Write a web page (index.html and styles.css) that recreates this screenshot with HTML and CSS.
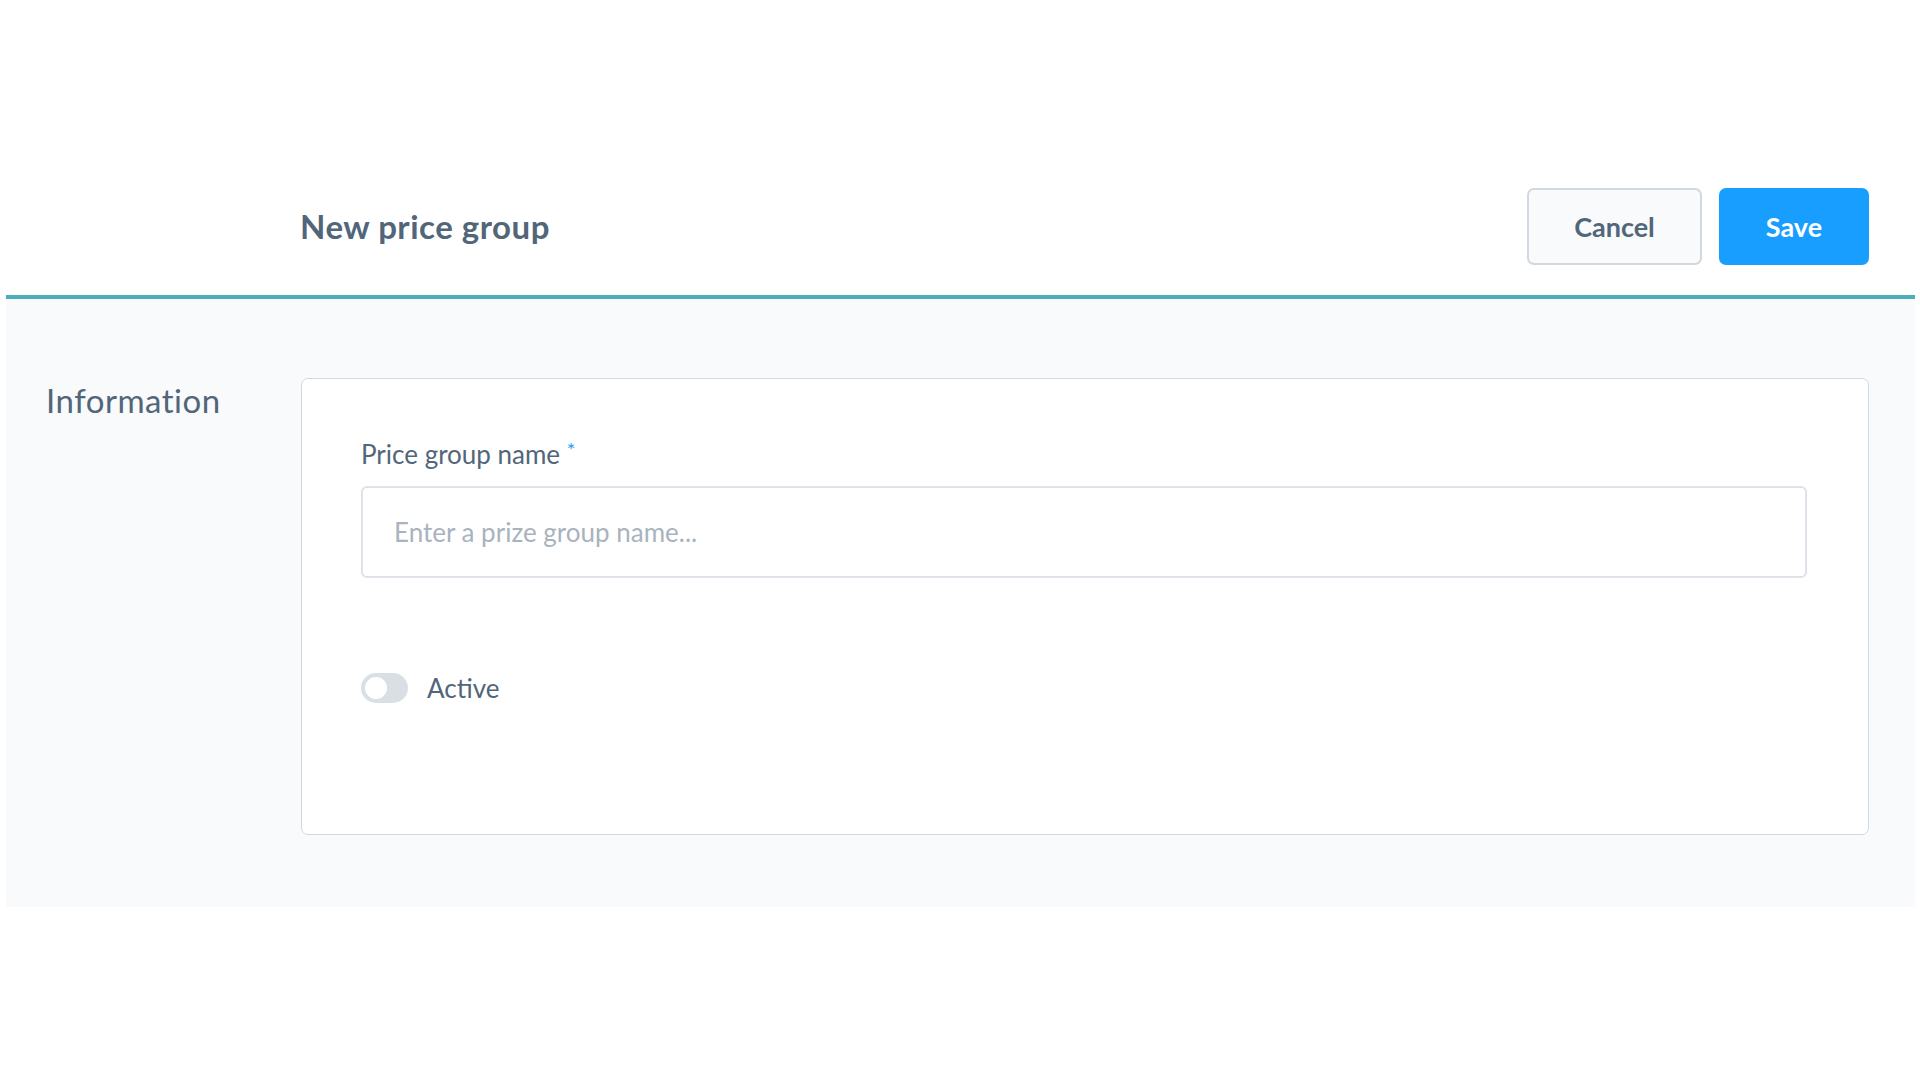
FILE: index.html
```html
<!DOCTYPE html>
<html lang="en">
<head>
<meta charset="utf-8">
<title>New price group</title>
<link rel="stylesheet" href="styles.css">
</head>
<body>
<div class="page">
  <header class="smart-bar">
    <h1 class="smart-bar__title">New price group</h1>
    <div class="smart-bar__actions">
      <button class="btn btn--default">Cancel</button>
      <button class="btn btn--primary">Save</button>
    </div>
  </header>
  <main class="content">
    <h2 class="section-title">Information</h2>
    <section class="card">
      <label class="field-label" for="name">Price group name <span class="required">*</span></label>
      <input id="name" class="text-input" type="text" placeholder="Enter a prize group name...">
      <div class="switch-row">
        <span class="switch"><span class="switch__knob"></span></span>
        <span class="switch-label">Active</span>
      </div>
    </section>
  </main>
</div>
</body>
</html>
```

FILE: styles.css
```css
* { box-sizing: border-box; }

html, body {
  margin: 0;
  padding: 0;
  background: #ffffff;
}

body {
  font-family: "Lato", "Noto Sans", sans-serif;
  color: #52667a;
}

.page {
  padding: 0 5px 0 6px;
}

.smart-bar {
  height: 299px;
  display: flex;
  align-items: flex-end;
  justify-content: space-between;
  padding: 0 46px 30px 294px;
  border-bottom: 4px solid #4aaebd;
}

.smart-bar__title {
  margin: 0 0 22px 0;
  font-size: 33px;
  line-height: 33px;
  font-weight: 700;
  letter-spacing: 0.5px;
  color: #52667a;
}

.smart-bar__actions {
  display: flex;
  gap: 17px;
}

.btn {
  height: 77px;
  border-radius: 7px;
  font-family: "Lato", "Noto Sans", sans-serif;
  font-size: 27px;
  font-weight: 700;
  cursor: pointer;
  padding: 0;
}

.btn--default {
  width: 175px;
  background: #f9fafb;
  border: 2px solid #d1d9e0;
  color: #52667a;
}

.btn--primary {
  width: 150px;
  background: #189eff;
  border: 2px solid #189eff;
  color: #ffffff;
}

.content {
  background: #f9fafb;
  display: grid;
  grid-template-columns: 255px 1568px;
  align-items: start;
  padding: 79px 0 72px 40px;
}

.section-title {
  margin: 6px 0 0 0;
  font-size: 33px;
  line-height: 33px;
  font-weight: 400;
  letter-spacing: 0.5px;
  color: #52667a;
}

.card {
  background: #ffffff;
  border: 1px solid #d1d9e0;
  border-radius: 7px;
  padding: 62px 61px 131px 59px;
  display: flex;
  flex-direction: column;
}

.field-label {
  display: block;
  font-size: 26px;
  line-height: 26px;
  height: 26px;
  color: #52667a;
  margin-bottom: 19px;
}

.required {
  position: relative;
  top: -7px;
  color: #189eff;
  font-size: 20px;
  line-height: 0;
}

.text-input {
  display: block;
  width: 100%;
  height: 92px;
  border: 2px solid #dde3e9;
  border-radius: 6px;
  background: #ffffff;
  padding: 0 0 0 31px;
  font-family: "Lato", "Noto Sans", sans-serif;
  font-size: 26px;
  color: #52667a;
  outline: none;
}

.text-input::placeholder {
  color: #a9b3be;
}

.switch-row {
  display: flex;
  align-items: center;
  gap: 19px;
  margin-top: 95px;
}

.switch {
  width: 47px;
  height: 30px;
  border-radius: 15px;
  background: #d9dfe5;
  display: flex;
  align-items: center;
  padding-left: 4px;
}

.switch__knob {
  width: 22px;
  height: 22px;
  border-radius: 50%;
  background: #ffffff;
}

.switch-label {
  font-size: 26px;
  line-height: 30px;
  color: #52667a;
}
```
